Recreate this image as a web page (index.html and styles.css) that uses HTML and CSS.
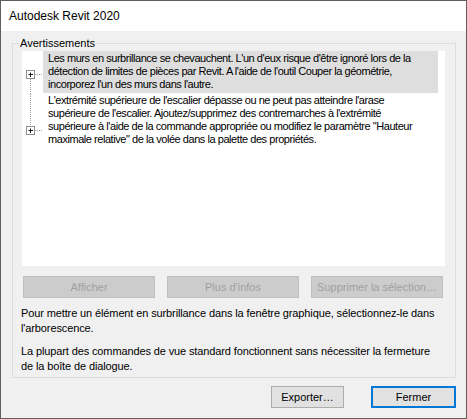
FILE: index.html
```html
<!DOCTYPE html>
<html lang="fr">
<head>
<meta charset="utf-8">
<title>Autodesk Revit 2020</title>
<link rel="stylesheet" href="styles.css">
</head>
<body>
<div class="window">
  <div class="titlebar">Autodesk Revit 2020</div>
  <div class="content">
    <fieldset class="group">
      <legend class="legend">Avertissements</legend>
      <div class="list">
        <div class="row row-selected">
          <svg class="tree" width="21" height="43" viewBox="0 0 21 43">
            <line x1="8.5" y1="28" x2="8.5" y2="43" class="dots"/>
            <line x1="13" y1="23.5" x2="21" y2="23.5" class="dots"/>
            <rect x="4.5" y="19.5" width="8" height="8" class="box"/>
            <line x1="6.5" y1="23.5" x2="11" y2="23.5" class="plus"/>
            <line x1="8.5" y1="21.5" x2="8.5" y2="26" class="plus"/>
          </svg>
          <div class="row-text">Les murs en surbrillance se chevauchent. L'un d'eux risque d'être ignoré lors de la<br>détection de limites de pièces par Revit. A l'aide de l'outil Couper la géométrie,<br>incorporez l'un des murs dans l'autre.</div>
        </div>
        <div class="row">
          <svg class="tree" width="21" height="54" viewBox="0 0 21 54">
            <line x1="8.5" y1="0" x2="8.5" y2="32" class="dots"/>
            <line x1="13" y1="36.5" x2="21" y2="36.5" class="dots"/>
            <rect x="4.5" y="32.5" width="8" height="8" class="box"/>
            <line x1="6.5" y1="36.5" x2="11" y2="36.5" class="plus"/>
            <line x1="8.5" y1="34.5" x2="8.5" y2="39" class="plus"/>
          </svg>
          <div class="row-text">L'extrémité supérieure de l'escalier dépasse ou ne peut pas atteindre l'arase<br>supérieure de l'escalier. Ajoutez/supprimez des contremarches à l'extrémité<br>supérieure à l'aide de la commande appropriée ou modifiez le paramètre "Hauteur<br>maximale relative" de la volée dans la palette des propriétés.</div>
        </div>
      </div>
      <div class="actions">
        <button class="btn btn-disabled" disabled>Afficher</button>
        <button class="btn btn-disabled" disabled>Plus d'infos</button>
        <button class="btn btn-disabled" disabled>Supprimer la sélection…</button>
      </div>
      <p class="note">Pour mettre un élément en surbrillance dans la fenêtre graphique, sélectionnez-le dans<br>l'arborescence.</p>
      <p class="note">La plupart des commandes de vue standard fonctionnent sans nécessiter la fermeture<br>de la boîte de dialogue.</p>
    </fieldset>
    <div class="footer">
      <button class="btn btn-normal btn-export">Exporter…</button>
      <button class="btn btn-normal btn-default">Fermer</button>
    </div>
  </div>
</div>
</body>
</html>
```

FILE: styles.css
```css
* { box-sizing: border-box; }
html, body { margin: 0; padding: 0; }
body {
  width: 467px;
  height: 419px;
  background: #f0f0f0;
  font-family: "Liberation Sans", Arial, sans-serif;
  overflow: hidden;
}
.window {
  width: 467px;
  height: 419px;
  border: 1px solid #5f5f5f;
  background: #f0f0f0;
  display: flex;
  flex-direction: column;
}
.titlebar {
  height: 30px;
  background: #ffffff;
  font-size: 12px;
  line-height: 30px;
  padding-left: 8px;
  color: #000;
  flex: none;
}
.content {
  flex: 1;
  padding: 5px 10px 0 11px;
  display: flex;
  flex-direction: column;
}
.group {
  margin: 0;
  border: 1px solid #dcdcdc;
  padding: 1px 10px 0 9px;
  min-width: 0;
  height: 342px;
}
.legend {
  font-size: 11px;
  line-height: 14px;
  padding: 0 1px;
  margin-left: -3px;
  color: #000;
}
.list {
  background: #ffffff;
  height: 215px;
}
.row {
  display: flex;
  align-items: flex-start;
}
.row-text {
  font-size: 11px;
  line-height: 13px;
  letter-spacing: -0.45px;
  white-space: nowrap;
  color: #000;
  padding: 0 6px 2px 5px;
  flex: 1;
  min-width: 0;
}
.row-selected .row-text {
  background: #dedede;
  padding: 1px 0 2px 5px;
  margin-right: 7px;
  margin-bottom: 1px;
}
.tree { flex: none; display: block; }
.dots { stroke: #a0a0a0; stroke-width: 1; stroke-dasharray: 1 1; }
.box { fill: #ffffff; stroke: #919191; stroke-width: 1; }
.plus { stroke: #1a1a1a; stroke-width: 1; }
.actions {
  display: flex;
  gap: 12px;
  margin-top: 10px;
  padding-left: 1px;
}
.btn {
  font-family: "Liberation Sans", Arial, sans-serif;
  font-size: 11px;
  height: 22px;
  padding: 0;
  margin: 0;
}
.btn-disabled {
  width: 132px;
  background: #cccccc;
  border: 1px solid #bfbfbf;
  color: #a0a0a0;
}
.note {
  margin: 8px 0 0 -1px;
  font-size: 11px;
  line-height: 15px;
  letter-spacing: -0.12px;
  white-space: nowrap;
  color: #000;
}
.footer {
  display: flex;
  justify-content: flex-end;
  gap: 27px;
  margin-top: 8px;
}
.btn-normal {
  background: #e1e1e1;
  border: 1px solid #adadad;
  color: #000;
}
.btn-export { width: 73px; }
.btn-default {
  width: 85px;
  border: 2px solid #0078d7;
}
```
